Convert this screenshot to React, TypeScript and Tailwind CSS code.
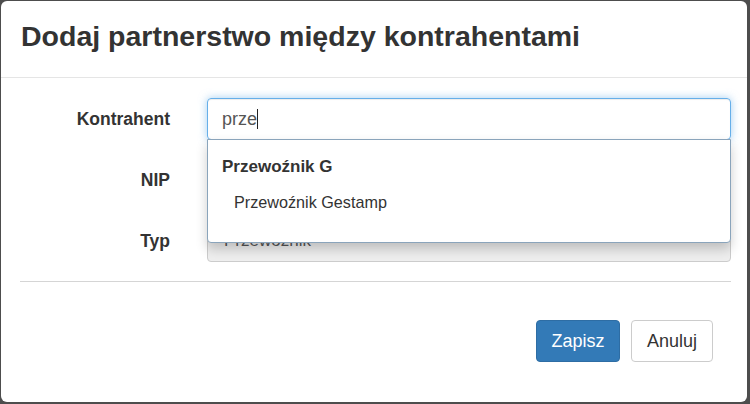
import React from "react";

export default function App() {
  const font = { fontFamily: '"Liberation Sans", Arial, sans-serif' };
  return (
    <div className="w-[750px] h-[404px] bg-[#4d4d4d] pt-[1px] pl-[1px]" style={font}>
      <div className="w-[746px] h-[401px] bg-white rounded-[6px] flex flex-col text-[#333]">
        <div className="h-[77px] border-b border-[#e5e5e5] flex items-center pl-[20px] pb-[5px]">
          <h4 className="text-[28.5px] font-bold text-[#333] leading-none">Dodaj partnerstwo między kontrahentami</h4>
        </div>
        <div className="pt-[20px] pl-[19px] pr-[16px]">
          <div className="flex flex-col gap-[19px]">
            <div className="flex items-center relative">
              <label className="w-[150px] text-right text-[17.5px] font-bold pr-0">Kontrahent</label>
              <div className="ml-[37px] flex-1 relative">
                <div className="h-[42px] border border-[#66afe9] rounded-[4px] shadow-[inset_0_1px_1px_rgba(0,0,0,0.075),0_0_8px_rgba(102,175,233,0.6)] flex items-center pl-[14px] text-[18px] text-[#555]">
                  prze<span className="inline-block w-[1px] h-[20px] bg-[#222]" />
                </div>
                <div className="absolute left-0 right-0 top-[41px] h-[104px] bg-white border border-[#8aa4bb] rounded-b-[4px] shadow-[0_6px_12px_rgba(0,0,0,0.2)] z-10">
                  <div className="pl-[14px] pt-[17px] text-[17px] leading-[20px] font-bold text-[#333]">Przewoźnik G</div>
                  <div className="pl-[26px] pt-[15px] text-[16.2px] leading-[20px] text-[#333]">Przewoźnik Gestamp</div>
                </div>
              </div>
            </div>
            <div className="flex items-center">
              <label className="w-[150px] text-right text-[17.5px] font-bold">NIP</label>
              <div className="ml-[37px] flex-1 h-[42px] border border-[#ccc] rounded-[4px] bg-[#eee]" />
            </div>
            <div className="flex items-center">
              <label className="w-[150px] text-right text-[17.5px] font-bold">Typ</label>
              <div className="ml-[37px] flex-1 h-[42px] border border-[#ccc] rounded-[4px] bg-[#eee] flex items-center pl-[16px] text-[17px] text-[#555]">
                Przewoźnik
              </div>
            </div>
          </div>
          <div className="mt-[19px] border-t border-[#d5d5d5]" />
          <div className="flex justify-end gap-[11px] pt-[38px] pr-[18px]">
            <button className="w-[84px] h-[42px] rounded-[4px] bg-[#337ab7] border border-[#2e6da4] text-white text-[18px]">Zapisz</button>
            <button className="w-[82px] h-[42px] rounded-[4px] bg-white border border-[#ccc] text-[#333] text-[18px]">Anuluj</button>
          </div>
        </div>
      </div>
    </div>
  );
}
